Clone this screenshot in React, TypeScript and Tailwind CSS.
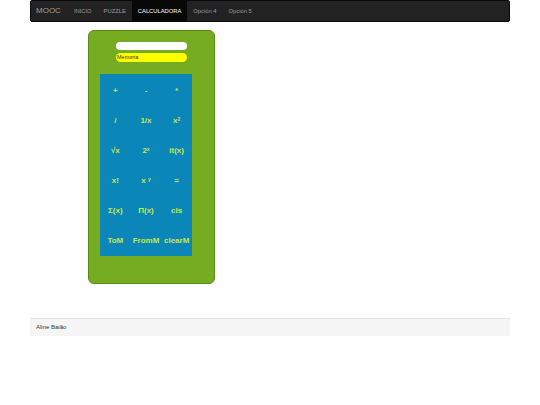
import React from "react"

const rows: React.ReactNode[][] = [
  ["+", "-", "*"],
  ["/", "1/x", <>x<sup className="text-[5px]">2</sup></>],
  ["√x", <>2<sup className="text-[5px]">x</sup></>, "lt(x)"],
  ["x!", <>x <sup className="text-[5px]">y</sup></>, "="],
  ["Σ(x)", "Π(x)", "cls"],
  ["ToM", "FromM", "clearM"],
]

const links = ["INICIO", "PUZZLE", "CALCULADORA", "Opción 4", "Opción 5"]

export default function App() {
  return (
    <div className="w-[540px] h-[405px] bg-white font-['Liberation_Sans',Arial,sans-serif]">
      <div className="mx-[30px] h-[22px] bg-[#222] border border-[#080808] rounded-[2px] flex items-stretch">
        <div className="pl-[5px] pr-[7px] flex items-center text-[8px] text-[#9d9d9d]">MOOC</div>
        {links.map((l) => (
          <div
            key={l}
            className={
              l === "CALCULADORA"
                ? "px-[6px] flex items-center text-[5.8px] text-white bg-[#080808]"
                : "px-[6px] flex items-center text-[5.8px] text-[#9d9d9d]"
            }
          >
            {l}
          </div>
        ))}
      </div>

      <div className="ml-[88px] mt-[8px] w-[127px] h-[254px] bg-[#76ac22] border border-[#5b8a17] rounded-[6px] flex flex-col items-center">
        <div className="mt-[11px] w-[71px] h-[8px] bg-white rounded-full" />
        <div className="mt-[3px] w-[71px] h-[9px] bg-[#ffff00] rounded-full text-[5.5px] leading-[9px] text-[#333] pl-[1px]">
          Memoria
        </div>
        <div className="self-start ml-[11px] mt-[12px] w-[92px] h-[182px] bg-[#0a87b8] grid grid-cols-3 grid-rows-6 pt-[2px]">
          {rows.flat().map((b, i) => (
            <div
              key={i}
              className="flex items-center justify-center text-[8px] font-bold text-[#c6e84e]"
            >
              <span>{b}</span>
            </div>
          ))}
        </div>
      </div>

      <div className="mx-[30px] mt-[34px] h-[18px] bg-[#f5f5f5] border-t border-[#e5e5e5] flex items-center pl-[6px] text-[6px] text-[#333]">
        Aline Baião
      </div>
    </div>
  )
}
